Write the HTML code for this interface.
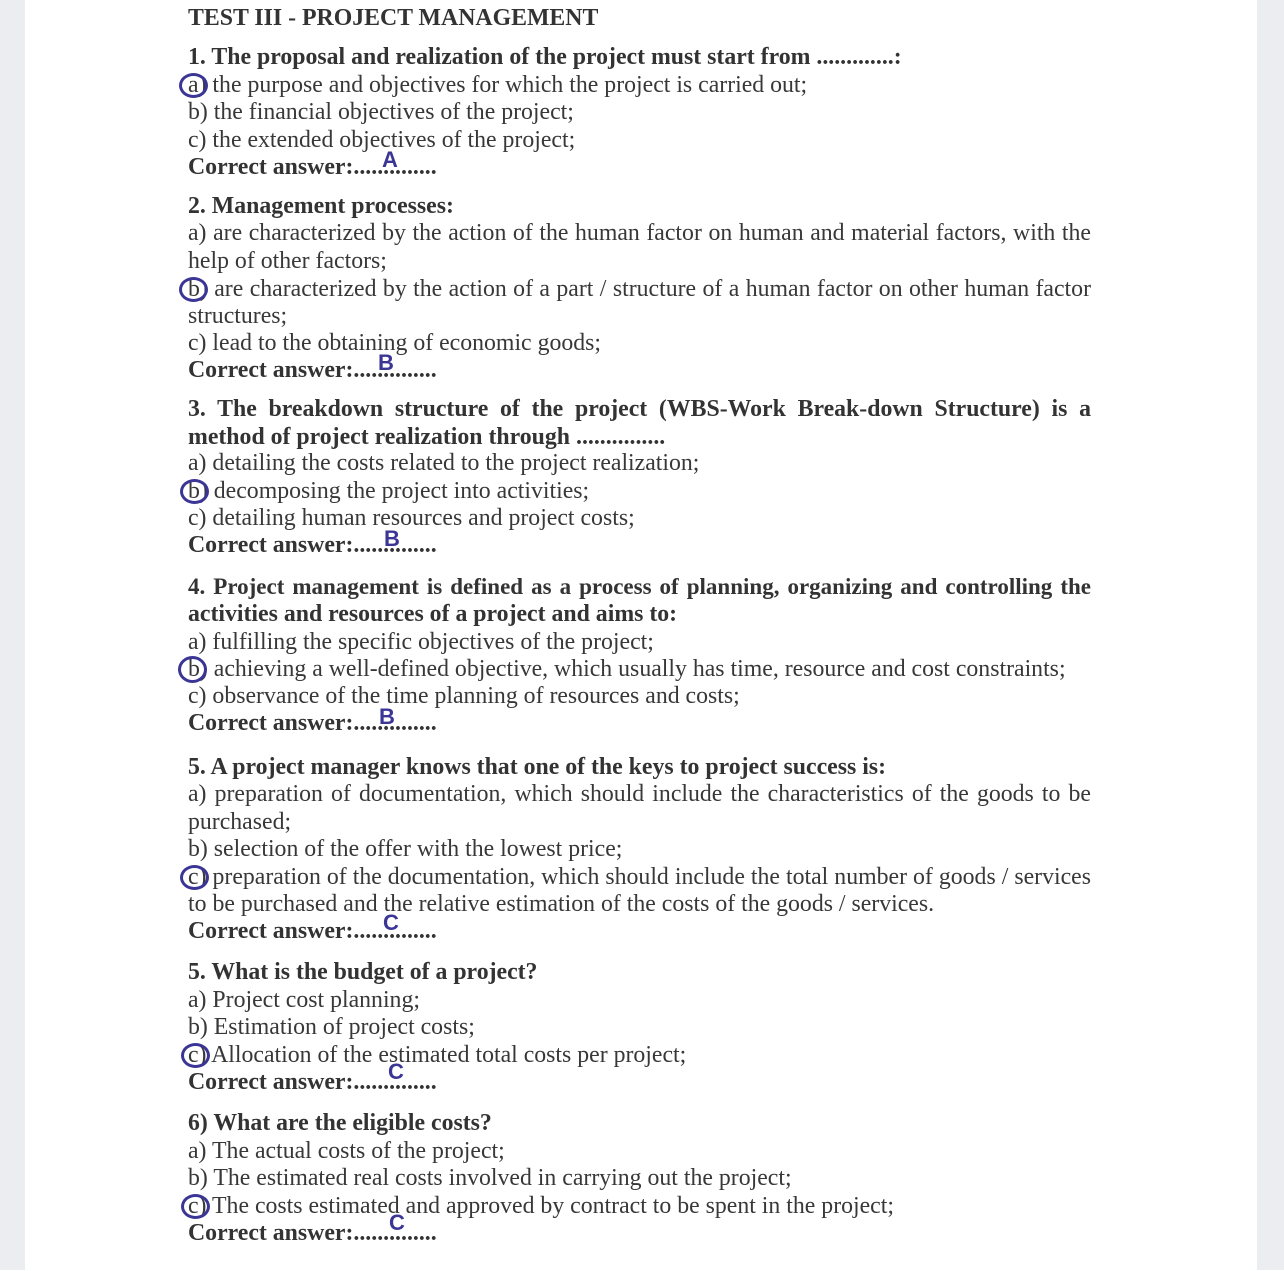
<!DOCTYPE html>
<html><head><meta charset="utf-8"><style>
body{margin:0;width:1284px;height:1270px;background:#fff;position:relative;overflow:hidden;font-family:"Liberation Serif",serif;color:#383838;}
.el{position:absolute;top:0;height:1270px;width:25px;background:#ecedf1;}
.w{position:absolute;left:0;top:1px;width:1284px;height:1270px;}
.l{position:absolute;left:188px;font-size:23.8px;line-height:26px;white-space:nowrap;}
.j{width:903px;text-align:justify;text-align-last:justify;white-space:normal;}
b{font-weight:bold;color:#333;}
.c{position:absolute;border:3px solid #3b3596;border-radius:50%;width:23px;height:19px;}
.h{position:absolute;color:#3b3596;font-family:"Liberation Sans",sans-serif;font-weight:bold;font-size:22px;line-height:22px;}
</style></head><body>
<div class="el" style="left:0"></div><div class="el" style="right:0;width:27px"></div>
<div class="w">
<div class="l" style="top:4px;font-size:23.8px"><b>TEST III - PROJECT MANAGEMENT</b></div>
<div class="l" style="top:43px"><b>1. The proposal and realization of the project must start from .............:</b></div>
<div class="l" style="top:71px">a) the purpose and objectives for which the project is carried out;</div>
<div class="l" style="top:98px">b) the financial objectives of the project;</div>
<div class="l" style="top:126px">c) the extended objectives of the project;</div>
<div class="l" style="top:153px"><b>Correct answer:..............</b></div>
<div class="l" style="top:192px"><b>2. Management processes:</b></div>
<div class="l j" style="top:219px">a) are characterized by the action of the human factor on human and material factors, with the</div>
<div class="l" style="top:247px">help of other factors;</div>
<div class="l j" style="top:275px">b) are characterized by the action of a part / structure of a human factor on other human factor</div>
<div class="l" style="top:302px">structures;</div>
<div class="l" style="top:329px">c) lead to the obtaining of economic goods;</div>
<div class="l" style="top:356px"><b>Correct answer:..............</b></div>
<div class="l j" style="top:395px"><b>3. The breakdown structure of the project (WBS-Work Break-down Structure) is a</b></div>
<div class="l" style="top:423px"><b>method of project realization through ...............</b></div>
<div class="l" style="top:449px">a) detailing the costs related to the project realization;</div>
<div class="l" style="top:477px">b) decomposing the project into activities;</div>
<div class="l" style="top:504px">c) detailing human resources and project costs;</div>
<div class="l" style="top:531px"><b>Correct answer:..............</b></div>
<div class="l j" style="top:573px;font-size:23px"><b>4. Project management is defined as a process of planning, organizing and controlling the</b></div>
<div class="l" style="top:600px"><b>activities and resources of a project and aims to:</b></div>
<div class="l" style="top:628px">a) fulfilling the specific objectives of the project;</div>
<div class="l" style="top:655px">b) achieving a well-defined objective, which usually has time, resource and cost constraints;</div>
<div class="l" style="top:682px">c) observance of the time planning of resources and costs;</div>
<div class="l" style="top:709px"><b>Correct answer:..............</b></div>
<div class="l" style="top:753px"><b>5. A project manager knows that one of the keys to project success is:</b></div>
<div class="l j" style="top:780px">a) preparation of documentation, which should include the characteristics of the goods to be</div>
<div class="l" style="top:808px">purchased;</div>
<div class="l" style="top:835px">b) selection of the offer with the lowest price;</div>
<div class="l j" style="top:863px">c) preparation of the documentation, which should include the total number of goods / services</div>
<div class="l" style="top:890px">to be purchased and the relative estimation of the costs of the goods / services.</div>
<div class="l" style="top:917px"><b>Correct answer:..............</b></div>
<div class="l" style="top:958px"><b>5. What is the budget of a project?</b></div>
<div class="l" style="top:986px">a) Project cost planning;</div>
<div class="l" style="top:1013px">b) Estimation of project costs;</div>
<div class="l" style="top:1041px">c) Allocation of the estimated total costs per project;</div>
<div class="l" style="top:1068px"><b>Correct answer:..............</b></div>
<div class="l" style="top:1109px"><b>6) What are the eligible costs?</b></div>
<div class="l" style="top:1137px">a) The actual costs of the project;</div>
<div class="l" style="top:1164px">b) The estimated real costs involved in carrying out the project;</div>
<div class="l" style="top:1192px">c) The costs estimated and approved by contract to be spent in the project;</div>
<div class="l" style="top:1219px"><b>Correct answer:..............</b></div>
</div>
<div class="c" style="left:179px;top:73px"></div>
<div class="c" style="left:179px;top:277px"></div>
<div class="c" style="left:180px;top:479px"></div>
<div class="c" style="left:178px;top:656px;height:21px"></div>
<div class="c" style="left:180px;top:865px"></div>
<div class="c" style="left:181px;top:1043px"></div>
<div class="c" style="left:181px;top:1194px"></div>
<div class="h" style="left:382px;top:149px">A</div>
<div class="h" style="left:378px;top:352px">B</div>
<div class="h" style="left:384px;top:528px">B</div>
<div class="h" style="left:379px;top:706px">B</div>
<div class="h" style="left:383px;top:912px">C</div>
<div class="h" style="left:388px;top:1061px">C</div>
<div class="h" style="left:389px;top:1212px">C</div>
</body></html>
